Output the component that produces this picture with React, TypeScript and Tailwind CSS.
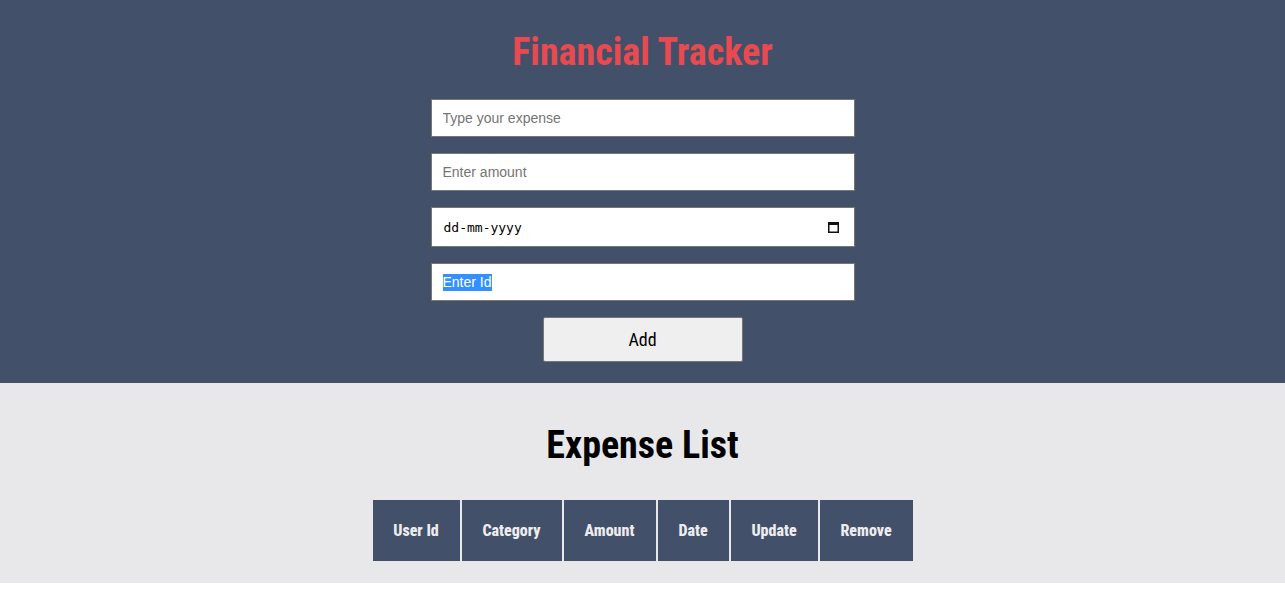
import React from "react";

const cond = { fontFamily: '"Roboto Condensed", "Liberation Sans Narrow", Roboto, sans-serif' };

function Calendar() {
  return (
    <svg width="11" height="12" viewBox="0 0 11 12" className="block">
      <rect x="0.75" y="1.75" width="9.5" height="9.5" fill="none" stroke="#111" strokeWidth="1.5" />
      <rect x="0.75" y="1.5" width="9.5" height="2.5" fill="#111" />
    </svg>
  );
}

export default function App() {
  const cols = [
    ["User Id", "w-[87px]"],
    ["Category", "w-[100px]"],
    ["Amount", "w-[92px]"],
    ["Date", "w-[71px]"],
    ["Update", "w-[87px]"],
    ["Remove", "w-[93px]"],
  ];
  return (
    <div className="w-full min-h-[591px] bg-white" style={cond}>
      <header className="bg-[#435069] flex flex-col items-center pt-[29px] pb-[21px]">
        <h1 className="text-[38px] leading-[47px] font-bold text-[#e84a4f] m-0">Financial Tracker</h1>
        <div className="mt-[23px] flex flex-col gap-[16px] w-[424px]" style={{ fontFamily: '"Liberation Sans", Arial, sans-serif' }}>
          <input
            className="h-[38px] w-full bg-white border border-[#767676] px-[11px] text-[14px] text-black placeholder:text-[#757575] outline-none"
            placeholder="Type your expense"
          />
          <input
            className="h-[38px] w-full bg-white border border-[#767676] px-[11px] text-[14px] text-black placeholder:text-[#757575] outline-none"
            placeholder="Enter amount"
          />
          <div className="h-[40px] w-full bg-white border border-[#767676] pl-[12px] pr-[15px] flex items-center justify-between">
            <span className="text-[13px] text-black pt-[2px]" style={{ fontFamily: '"DejaVu Sans Mono", monospace' }}>
              dd-mm-yyyy
            </span>
            <Calendar />
          </div>
          <div className="h-[38px] w-full bg-white border border-[#767676] px-[11px] flex items-center">
            <span className="bg-[#3390ff] text-white text-[14px] leading-[17px]">Enter Id</span>
          </div>
        </div>
        <button className="mt-[16px] w-[200px] h-[45px] bg-[#efefef] border border-[#767676] rounded-[2px] text-[18px] text-black">
          Add
        </button>
      </header>
      <section className="bg-[#e8e8ea] h-[200px] flex flex-col items-center">
        <h2 className="mt-[39px] text-[38px] leading-[47px] font-bold text-black">Expense List</h2>
        <div className="mt-[31px] flex gap-[2px]">
          {cols.map(([label, w]) => (
            <div
              key={label}
              className={`${w} h-[61px] bg-[#435069] flex items-center justify-center text-[16px] font-extrabold text-[#ededf0]`}
            >
              {label}
            </div>
          ))}
        </div>
      </section>
    </div>
  );
}
